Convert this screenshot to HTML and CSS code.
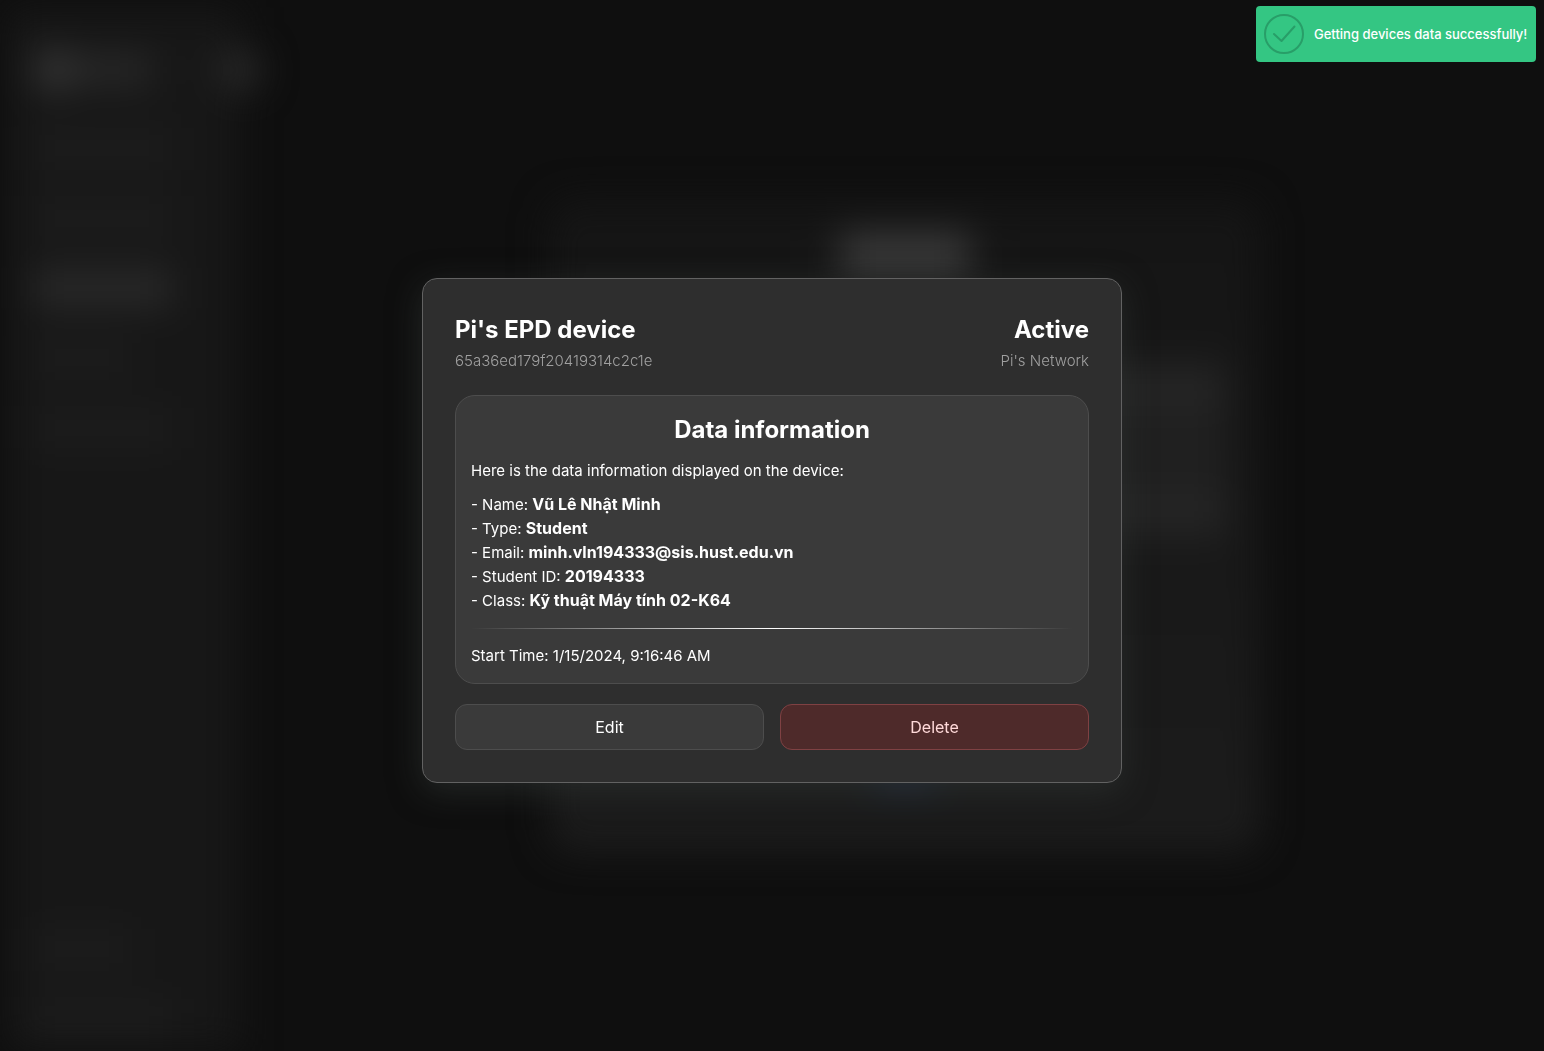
FILE: index.html
```html
<!DOCTYPE html>
<html lang="en">
<head>
  <meta charset="utf-8">
  <meta name="viewport" content="width=device-width, initial-scale=1">
  <title>Pi's EPD device</title>
  <link rel="stylesheet" href="styles.css">
</head>
<body>
  <div class="app" aria-hidden="true">
    <div class="sidebar">
      <div class="brand">
        <span class="brand-logo"></span>
        <span class="brand-name"></span>
        <span class="brand-toggle"></span>
      </div>
      <div class="nav">
        <span class="nav-item"></span>
        <span class="nav-item"></span>
        <span class="nav-item nav-item-active"></span>
        <span class="nav-item nav-item-short"></span>
        <span class="nav-item"></span>
      </div>
      <div class="nav nav-bottom">
        <span class="nav-item nav-item-short"></span>
        <span class="nav-item"></span>
      </div>
    </div>
    <div class="content">
      <div class="panel">
        <span class="panel-title"></span>
        <div class="panel-rows">
          <span class="panel-row"></span>
          <span class="panel-row"></span>
        </div>
        <span class="panel-link"></span>
      </div>
    </div>
  </div>

  <div class="overlay">
    <main class="modal" role="dialog" aria-modal="true" aria-labelledby="device-name">
      <header class="modal-header">
        <div>
          <h1 class="heading" id="device-name">Pi's EPD device</h1>
          <p class="subtitle">65a36ed179f20419314c2c1e</p>
        </div>
        <div class="status">
          <h2 class="heading">Active</h2>
          <p class="subtitle">Pi's Network</p>
        </div>
      </header>
      <section class="info">
        <h2 class="heading info-title">Data information</h2>
        <p class="info-intro">Here is the data information displayed on the device:</p>
        <ul class="info-list">
          <li>- Name: <strong>Vũ Lê Nhật Minh</strong></li>
          <li>- Type: <strong>Student</strong></li>
          <li>- Email: <strong>minh.vln194333@sis.hust.edu.vn</strong></li>
          <li>- Student ID: <strong>20194333</strong></li>
          <li>- Class: <strong>Kỹ thuật Máy tính 02-K64</strong></li>
        </ul>
        <hr class="divider">
        <p>Start Time: 1/15/2024, 9:16:46 AM</p>
      </section>
      <div class="actions">
        <button class="button" type="button">Edit</button>
        <button class="button button-danger" type="button">Delete</button>
      </div>
    </main>
  </div>

  <div class="toast" role="status">
    <svg class="toast-icon" viewBox="0 0 40 40" fill="none" stroke="currentColor" stroke-width="2" stroke-linecap="round" stroke-linejoin="round" aria-hidden="true">
      <circle cx="20" cy="20" r="19"/>
      <path d="M10 20 L17.500 27 L30.500 12.500"/>
    </svg>
    <span>Getting devices data successfully!</span>
  </div>
</body>
</html>
```
FILE: styles.css
```css
* {
  box-sizing: border-box;
}

body {
  margin: 0;
  min-height: 100vh;
  background: #0f0f0f;
  color: #fff;
  font-family: Inter, "Liberation Sans", sans-serif;
  font-size: 16px;
  line-height: 24px;
}

h1, h2, p, ul {
  margin: 0;
}

/* Page behind the dialog */
.app {
  position: fixed;
  inset: 0;
  display: flex;
  overflow: hidden;
  filter: blur(18px);
}

.sidebar {
  display: flex;
  flex-direction: column;
  width: 232px;
  margin: 8px 26px 0 8px;
  padding: 40px 0 12px 24px;
  background: #171717;
}

.brand {
  display: flex;
  align-items: center;
  height: 44px;
}

.brand-logo {
  width: 44px;
  height: 44px;
  border-radius: 50%;
  background: #343434;
}

.brand-name {
  width: 76px;
  height: 32px;
  background: #282828;
}

.brand-toggle {
  width: 40px;
  height: 40px;
  margin: 0 -20px 0 auto;
  border-radius: 50%;
  background: #2c2c2c;
}

.nav {
  display: flex;
  flex-direction: column;
  gap: 30px;
  padding-top: 36px;
}

.nav-bottom {
  margin-top: auto;
}

.nav-item {
  width: 140px;
  height: 40px;
  background: #1c1c1c;
}

.nav-item-short {
  width: 100px;
}

.nav-item-active {
  background: #282828;
}

.content {
  display: flex;
  flex: 1;
  align-items: center;
  justify-content: center;
}

.panel {
  display: flex;
  flex-direction: column;
  align-items: center;
  width: 712px;
  height: 652px;
  padding: 32px 36px;
  border-radius: 24px;
  background: linear-gradient(#151515, #1c1c1c);
}

.panel-title {
  width: 130px;
  height: 48px;
  background: #383838;
}

.panel-rows {
  display: flex;
  flex-direction: column;
  justify-content: space-between;
  width: 100%;
  height: 180px;
  margin-top: 80px;
  padding: 16px 0;
  background: #202020;
}

.panel-row {
  height: 28px;
  background: #262626;
}

.panel-link {
  width: 60px;
  height: 20px;
  margin-top: auto;
  margin-bottom: 36px;
  background: #1d2b48;
}

/* Dialog */
.overlay {
  position: relative;
  display: flex;
  align-items: center;
  justify-content: center;
  min-height: 100vh;
  padding: 10px 16px 0;
}

.modal {
  width: 100%;
  max-width: 700px;
  padding: 32px;
  border: 1px solid #626262;
  border-radius: 15px;
  background: #2e2e2e;
  box-shadow: 0 8px 32px rgba(48, 54, 51, 0.6);
}

.modal-header {
  display: flex;
  justify-content: space-between;
  margin-bottom: 22px;
}

.heading {
  font-size: 24px;
  font-weight: 700;
  line-height: 38px;
}

.subtitle {
  color: #a0a0a0;
  font-size: 15px;
  font-weight: 300;
}

.status {
  text-align: right;
}

.info {
  padding: 15px;
  border: 1px solid #4d4d4d;
  border-radius: 20px;
  background: #3a3a3a;
  font-size: 15px;
}

.info strong {
  font-size: 16px;
  line-height: 16px;
}

.info-title {
  text-align: center;
}

.info-intro {
  margin: 10px 0;
}

.info-list {
  padding: 0;
  list-style: none;
}

.divider {
  height: 1px;
  margin: 15px 0;
  border: 0;
  background: linear-gradient(90deg, transparent, #fff, transparent);
}

.actions {
  display: grid;
  grid-template-columns: 1fr 1fr;
  gap: 16px;
  margin-top: 20px;
}

.button {
  height: 46px;
  border: 1px solid #4d4d4d;
  border-radius: 12px;
  background: #3a3a3a;
  color: #fff;
  font: inherit;
  cursor: pointer;
}

.button-danger {
  border-color: #7f4143;
  background: #4e2a2a;
  color: #ffd9d9;
}

/* Notification */
.toast {
  position: fixed;
  top: 6px;
  right: 8px;
  display: flex;
  align-items: center;
  gap: 10px;
  width: 280px;
  padding: 8px;
  border-radius: 4px;
  background: #34c683;
  font-size: 13px;
  font-weight: 500;
  white-space: nowrap;
}

.toast-icon {
  flex: none;
  width: 40px;
  height: 40px;
  color: #289e68;
}
```
